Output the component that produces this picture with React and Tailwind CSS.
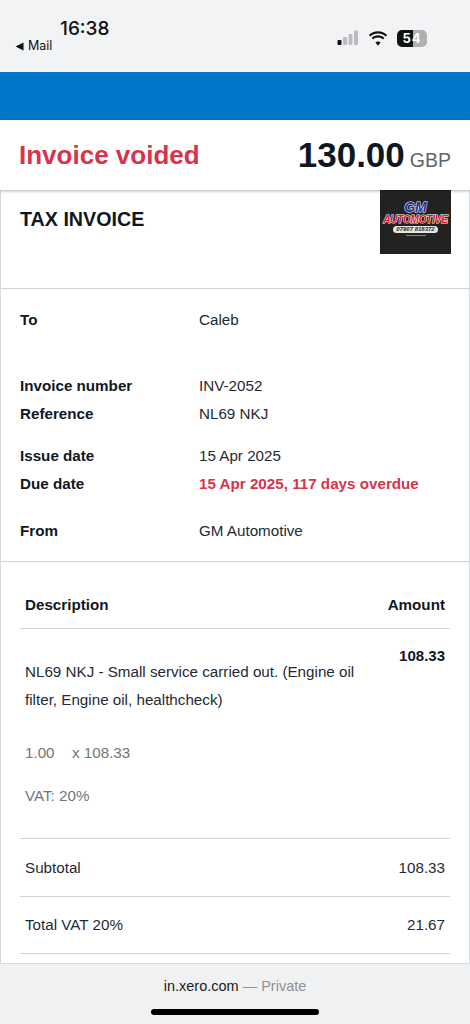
import React from 'react';

const MetaRow = ({ label, value, className = '', valueClass = 'text-[#1f2a33]' }) => (
  <div className={`flex h-[28px] items-center ${className}`}>
    <div className="w-[179px] text-[15.2px] font-bold text-[#10181f]">{label}</div>
    <div className={`text-[15.2px] ${valueClass}`}>{value}</div>
  </div>
);

const SummaryRow = ({ label, value, className = '' }) => (
  <div className={`flex items-center justify-between border-b border-[#cfd3d6] px-[5px] pt-[1px] text-[15.2px] text-[#1f2a33] ${className}`}>
    <span>{label}</span>
    <span>{value}</span>
  </div>
);

const Logo = () => (
  <div className="flex h-[64px] w-[71px] flex-col items-center overflow-hidden bg-[#222222] pt-[11px]">
    <div className="text-[14px] font-bold italic leading-[13px] text-[#2233a8] [-webkit-text-stroke:1px_#ffffff] [paint-order:stroke_fill]">GM</div>
    <div className="text-[10px] font-bold italic leading-[11px] tracking-[-0.2px] text-[#d9182b] [-webkit-text-stroke:1px_#ffffff] [paint-order:stroke_fill]">AUTOMOTIVE</div>
    <div className="mt-[1px] rounded-full bg-[#e6e6e6] px-[3px] text-[6px] font-bold italic leading-[7px] text-[#222222]">07907 818372</div>
    <div className="mt-[2px] h-[1px] w-[20px] bg-[#888888]"></div>
  </div>
);

const App = () => {
  return (
    <div className="flex h-[1024px] w-[470px] flex-col overflow-hidden bg-[#f1f2f4] font-['Liberation_Sans',Arial,sans-serif]">
      {/* ios status bar */}
      <div className="relative h-[72px] shrink-0 bg-[#f2f3f5]">
        <div className="absolute left-[60px] top-[17px] font-['Inter',sans-serif] text-[19px] font-medium leading-[24px] text-[#111111]">16:38</div>
        <div className="absolute left-[15px] top-[38px] flex items-center gap-[4px] font-['Inter',sans-serif] text-[12.5px] leading-[16px] text-[#111111]">
          <svg width="9" height="9" viewBox="0 0 9 9"><path d="M0.5 4.5L8.5 0.5V8.5Z" fill="#111111" /></svg>
          <span>Mail</span>
        </div>
        <svg className="absolute left-[337px] top-[30px]" width="24" height="16" viewBox="0 0 24 16">
          <rect x="0.5" y="10" width="4" height="5" rx="1" fill="#111111" />
          <rect x="6" y="7" width="4" height="8" rx="1" fill="#b9bbbe" />
          <rect x="11.5" y="4" width="4" height="11" rx="1" fill="#b9bbbe" />
          <rect x="17" y="0.5" width="4" height="14.5" rx="1" fill="#b9bbbe" />
        </svg>
        <svg className="absolute left-[368px] top-[31px]" width="20" height="16" viewBox="0 0 20 16">
          <path d="M10 2.5c3 0 5.7 1.2 7.7 3.1L19.2 4C16.8 1.6 13.6 0.2 10 0.2S3.2 1.6 0.8 4l1.5 1.6C4.3 3.7 7 2.5 10 2.5z" fill="#111111" />
          <path d="M10 6.6c1.9 0 3.6 0.7 4.9 1.9l1.500-1.600C14.700 5.300 12.500 4.300 10 4.300S5.300 5.300 3.600 6.900l1.500 1.600C6.400 7.300 8.100 6.600 10 6.600z" fill="#111111" />
          <path d="M10 10.500c-1 0-1.900 0.400-2.600 1L10 14.800l2.600-3.300c-0.700-0.600-1.600-1-2.600-1z" fill="#111111" />
        </svg>
        <div className="absolute left-[397px] top-[30px] flex h-[17px] w-[30px] items-center justify-center overflow-hidden rounded-[5px] bg-[linear-gradient(90deg,#111111_0,#111111_54%,#aeb0b3_54%,#aeb0b3_100%)] font-['Inter',sans-serif] text-[13px] font-bold leading-none tracking-[1px] text-white">
          54
        </div>
      </div>

      {/* blue xero bar */}
      <div className="h-[48px] shrink-0 bg-[#0176c9]"></div>

      {/* status header */}
      <div className="z-10 flex h-[70px] shrink-0 items-center justify-between bg-white pl-[19px] pr-[19px] shadow-[0_1px_3px_rgba(0,0,0,0.3)]">
        <div className="text-[26px] font-bold leading-[32px] text-[#d8334a]">Invoice voided</div>
        <div className="flex items-baseline gap-[5px]">
          <span className="text-[35px] font-bold leading-[40px] text-[#10181f]">130.00</span>
          <span className="text-[19.5px] text-[#5c666e]">GBP</span>
        </div>
      </div>

      {/* invoice page */}
      <div className="flex-1 overflow-hidden bg-white">
        <div className="h-[774px] overflow-hidden border-x border-b border-[#d6d9dc]">
          <div className="flex h-[99px] items-start justify-between border-b border-[#d0d3d6] pl-[19px] pr-[18px]">
            <h1 className="pt-[17px] text-[19.7px] font-bold leading-[24px] text-[#10181f]">TAX INVOICE</h1>
            <Logo />
          </div>

          <div className="h-[273px] border-b border-[#d0d3d6] pl-[19px] pt-[17px]">
            <MetaRow label="To" value="Caleb" />
            <MetaRow label="Invoice number" value="INV-2052" className="mt-[38px]" />
            <MetaRow label="Reference" value="NL69 NKJ" />
            <MetaRow label="Issue date" value="15 Apr 2025" className="mt-[14px]" />
            <MetaRow label="Due date" value="15 Apr 2025, 117 days overdue" valueClass="font-bold text-[#d8334a]" />
            <MetaRow label="From" value="GM Automotive" className="mt-[19px]" />
          </div>

          <div className="px-[19px] pt-[29px]">
            <div className="flex h-[38px] items-start justify-between border-b border-[#cfd3d6] px-[5px] text-[15.2px] font-bold leading-[28px] text-[#10181f]">
              <span>Description</span>
              <span>Amount</span>
            </div>
            <div className="h-[210px] border-b border-[#cfd3d6] px-[5px]">
              <div className="flex items-start justify-between">
                <p className="w-[345px] pt-[29px] text-[15.2px] leading-[28px] text-[#1f2a33]">
                  NL69 NKJ - Small service carried out. (Engine oil filter, Engine oil, healthcheck)
                </p>
                <span className="pt-[17px] text-[15px] font-bold leading-[20px] text-[#10181f]">108.33</span>
              </div>
              <div className="mt-[29px] flex text-[15.2px] leading-[20px] text-[#70767b]">
                <span className="w-[47px]">1.00</span>
                <span>x 108.33</span>
              </div>
              <div className="mt-[23px] text-[15.2px] leading-[20px] text-[#70767b]">VAT: 20%</div>
            </div>
            <SummaryRow label="Subtotal" value="108.33" className="h-[58px]" />
            <SummaryRow label="Total VAT 20%" value="21.67" className="h-[57px]" />
          </div>
        </div>
      </div>

      {/* safari address bar */}
      <div className="relative h-[60px] shrink-0 bg-[#f0f1f3]">
        <div className="pt-[13px] text-center text-[14.5px] leading-[18px] text-[#1c1c1e]">
          in.xero.com <span className="text-[#8e9296]">— Private</span>
        </div>
        <div className="absolute bottom-[9px] left-[151px] h-[6px] w-[168px] rounded-full bg-black"></div>
      </div>
    </div>
  );
};

export default App;
